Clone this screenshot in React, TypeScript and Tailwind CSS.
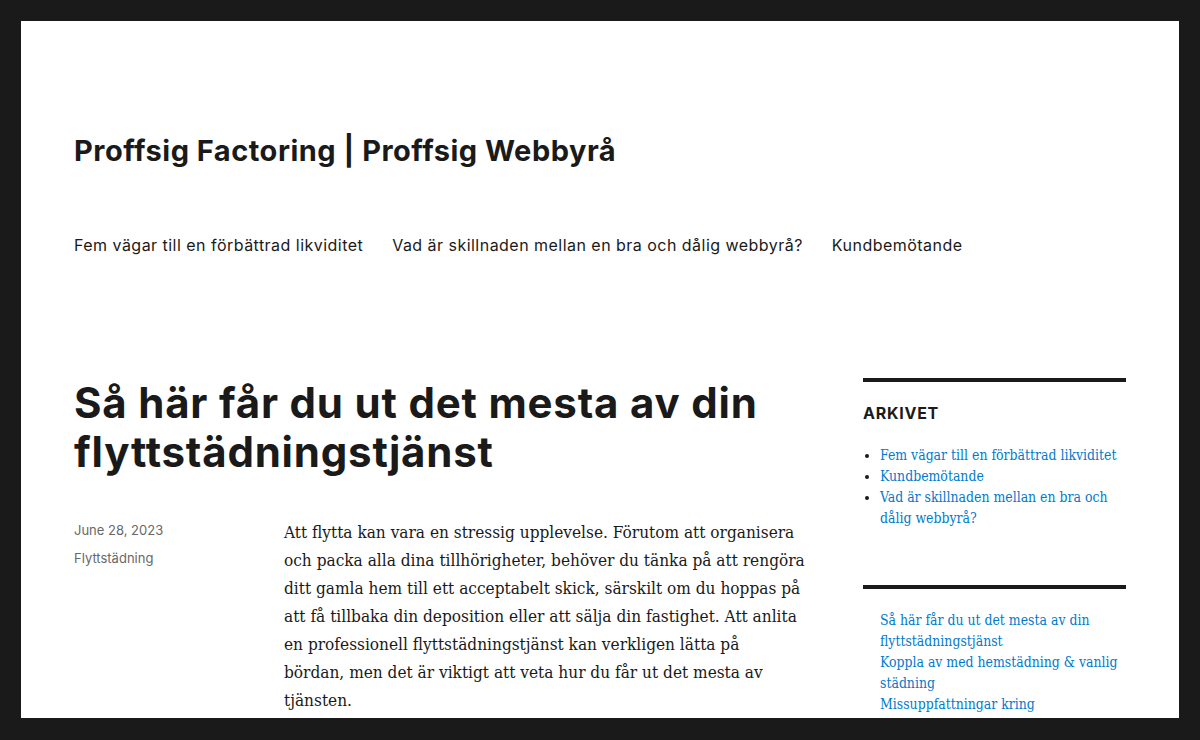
const heading = "font-['Inter','Noto_Sans',sans-serif]";
const serif = "font-['DejaVu_Serif','Liberation_Serif',serif] font-stretch-condensed";

const navItems = [
  "Fem vägar till en förbättrad likviditet",
  "Vad är skillnaden mellan en bra och dålig webbyrå?",
  "Kundbemötande",
];

const archive = [
  ["Fem vägar till en förbättrad likviditet"],
  ["Kundbemötande"],
  ["Vad är skillnaden mellan en bra och", "dålig webbyrå?"],
];

const recent = [
  ["Så här får du ut det mesta av din", "flyttstädningstjänst"],
  ["Koppla av med hemstädning & vanlig", "städning"],
  ["Missuppfattningar kring", "flyttstädning"],
];

const bodyLines = [
  "Att flytta kan vara en stressig upplevelse. Förutom att organisera",
  "och packa alla dina tillhörigheter, behöver du tänka på att rengöra",
  "ditt gamla hem till ett acceptabelt skick, särskilt om du hoppas på",
  "att få tillbaka din deposition eller att sälja din fastighet. Att anlita",
  "en professionell flyttstädningstjänst kan verkligen lätta på",
  "bördan, men det är viktigt att veta hur du får ut det mesta av",
  "tjänsten.",
];

export default function App() {
  return (
    <div className="h-[740px] overflow-hidden bg-[#1a1a1a] px-[21px] pt-[21px] pb-[22px]">
      <div className="h-full overflow-hidden bg-white px-[53px] text-[#1a1a1a]">
        <header>
          <p className={`${heading} pt-[111.5px] text-[29px] font-bold leading-[35px] tracking-[0.5px]`}>
            Proffsig Factoring | Proffsig Webbyrå
          </p>
          <nav className={`${heading} mt-[67px] flex gap-[29px] text-[16px] leading-[21px] tracking-[0.47px]`}>
            {navItems.map((n) => (
              <a key={n} className="whitespace-nowrap">
                {n}
              </a>
            ))}
          </nav>
        </header>

        <div className="mt-[122.5px] flex">
          <main className="w-[736px] shrink-0">
            <h1 className={`${heading} text-[42px] font-bold leading-[49px] tracking-[0.8px]`}>
              Så här får du ut det mesta av din
              <br />
              flyttstädningstjänst
            </h1>
            <div className="mt-[41.5px] flex">
              <div className={`${heading} mt-[2px] w-[210px] shrink-0 text-[13px] leading-[21px] text-[#686868]`}>
                <div className="mb-[7px]">June 28, 2023</div>
                <div>Flyttstädning</div>
              </div>
              <div className={`${serif} w-[526px] text-[17.1px] leading-[28px]`}>
                <p>
                  {bodyLines.map((l, i) => (
                    <span key={i} className="block whitespace-nowrap">
                      {l}
                    </span>
                  ))}
                </p>
              </div>
            </div>
          </main>

          <aside className="ml-auto w-[263px]">
            <section className="border-t-4 border-[#1a1a1a] pt-[20.5px]">
              <h2 className={`${heading} text-[16px] font-bold uppercase leading-[21px] tracking-[0.75px]`}>Arkivet</h2>
              <ul className={`${serif} mt-[21px] ml-[17px] list-disc text-[13.9px] leading-[21px] text-[#007acc] marker:text-[#1a1a1a]`}>
                {archive.map((a) => (
                  <li key={a[0]}>
                    {a.map((l) => (
                      <span key={l} className="block whitespace-nowrap">
                        {l}
                      </span>
                    ))}
                  </li>
                ))}
              </ul>
            </section>
            <section className="mt-[56.5px] border-t-4 border-[#1a1a1a] pt-[20.5px]">
              <ul className={`${serif} ml-[17px] text-[13.9px] leading-[21px] text-[#007acc]`}>
                {recent.map((a) => (
                  <li key={a[0]}>
                    {a.map((l) => (
                      <span key={l} className="block whitespace-nowrap">
                        {l}
                      </span>
                    ))}
                  </li>
                ))}
              </ul>
            </section>
          </aside>
        </div>
      </div>
    </div>
  );
}
